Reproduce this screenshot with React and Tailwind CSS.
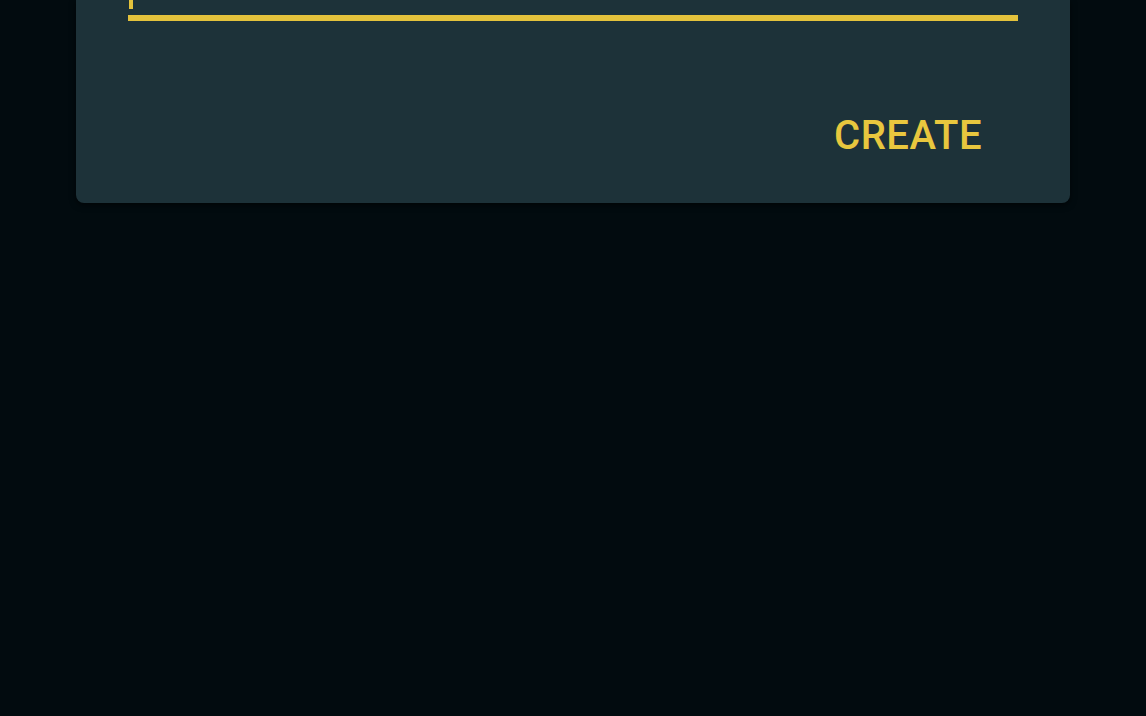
export default function App() {
  return (
    <div
      className="min-h-screen w-full bg-[#020b0f] px-[76px]"
      style={{ fontFamily: "Roboto, 'Liberation Sans', sans-serif" }}
    >
      <div className="w-[994px] rounded-b-[8px] bg-[#1d3239] px-[52px] pb-[43px] shadow-[0_2px_6px_rgba(0,0,0,0.6)]">
        {/* Text field */}
        <div className="h-[21px] border-b-[6px] border-[#e3c23c]">
          <div className="ml-[1px] h-[9px] w-[4px] bg-[#e3c23c]" />
        </div>

        {/* Actions */}
        <div className="mt-[91px] flex justify-end pr-[36px]">
          <button className="h-[48px] text-[40px] font-medium leading-[48px] tracking-[0.5px] text-[#e8c73e]">
            CREATE
          </button>
        </div>
      </div>
    </div>
  );
}
